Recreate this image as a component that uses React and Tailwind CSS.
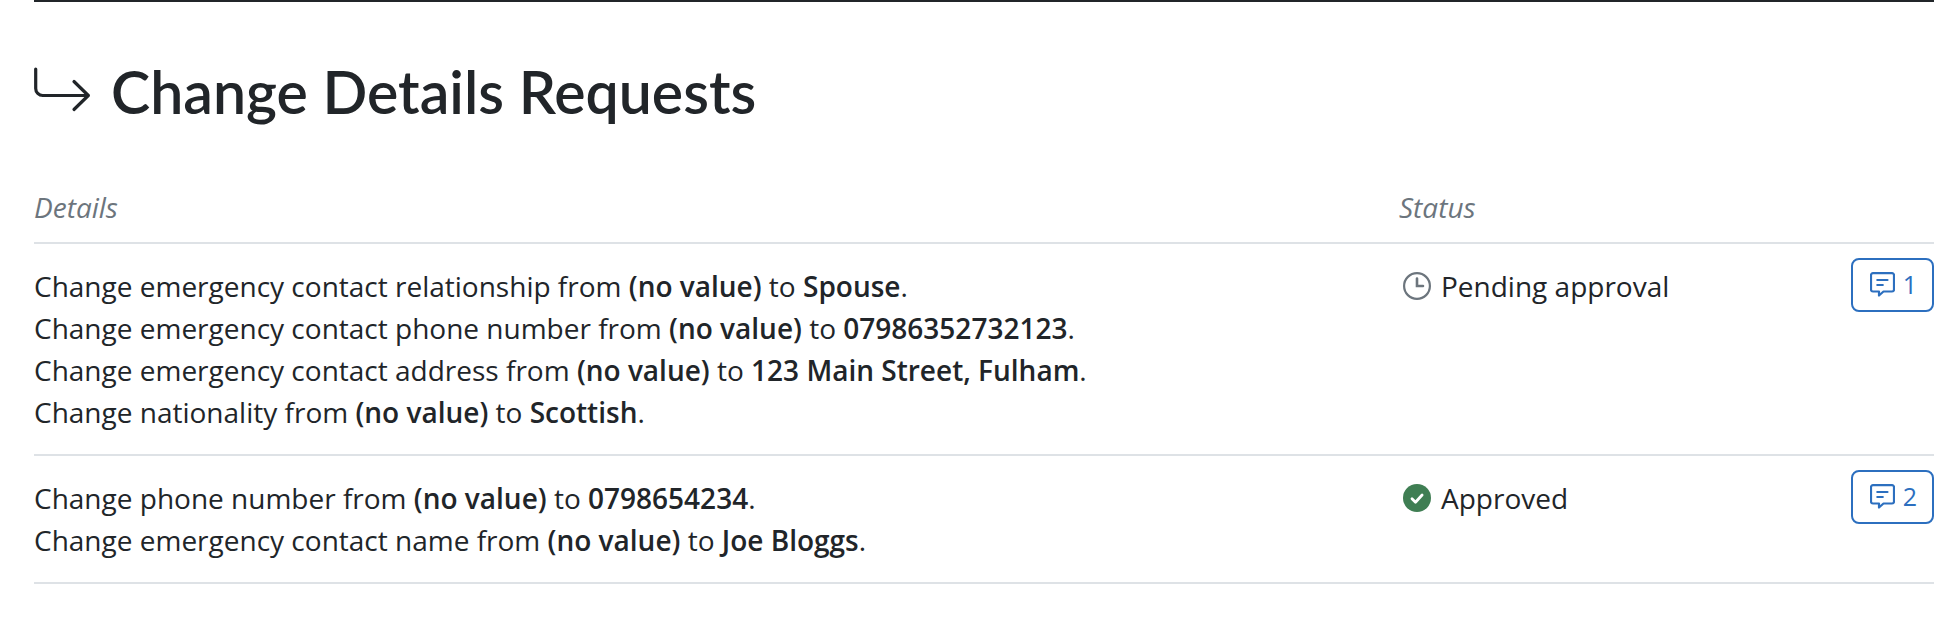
import React from 'react';

const requests = [
  {
    id: 1,
    status: 'pending',
    comments: 1,
    changes: [
      { field: 'emergency contact relationship', to: 'Spouse' },
      { field: 'emergency contact phone number', to: '07986352732123' },
      { field: 'emergency contact address', to: '123 Main Street, Fulham' },
      { field: 'nationality', to: 'Scottish' },
    ],
  },
  {
    id: 2,
    status: 'approved',
    comments: 2,
    changes: [
      { field: 'phone number', to: '0798654234' },
      { field: 'emergency contact name', to: 'Joe Bloggs' },
    ],
  },
];

function ArrowIcon() {
  return (
    <svg width="57" height="50" viewBox="0 0 57 50" fill="none" stroke="currentColor" strokeWidth="3.200" strokeLinecap="round" strokeLinejoin="round" aria-hidden="true">
      <path d="M1.700 2v19.500a7 7 0 0 0 7 7H54" />
      <path d="M40 14.500l14.300 14L40 42.500" />
    </svg>
  );
}

function ClockIcon() {
  return (
    <svg className="text-[#6c757d]" width="28" height="28" viewBox="0 0 28 28" fill="none" stroke="currentColor" strokeLinecap="round" aria-hidden="true">
      <circle cx="14" cy="14" r="12.900" strokeWidth="2.200" />
      <path d="M14 6.500V14h6" strokeWidth="2.600" />
    </svg>
  );
}

function CheckIcon() {
  return (
    <svg width="28" height="28" viewBox="0 0 28 28" fill="none" aria-hidden="true">
      <circle cx="14" cy="14" r="14" fill="#3f7e53" />
      <path d="M9 14.700l3.500 3.500 6.600-7.200" stroke="#fff" strokeWidth="2.800" strokeLinecap="round" strokeLinejoin="round" />
    </svg>
  );
}

function CommentIcon() {
  return (
    <svg width="25" height="25" viewBox="0 0 25 25" fill="none" stroke="currentColor" strokeWidth="2.200" strokeLinecap="round" strokeLinejoin="round" aria-hidden="true">
      <path d="M3 1.100h19a2 2 0 0 1 2 2v14.400a2 2 0 0 1-2 2h-8.500L9 23.500v-4H3a2 2 0 0 1-2-2V3.100a2 2 0 0 1 2-2z" />
      <path d="M7.300 8h10.200M7.300 13h5.500" />
    </svg>
  );
}

function Status({ status }) {
  return (
    <div className="flex items-center gap-2.5 pl-1">
      {status === 'approved' ? <CheckIcon /> : <ClockIcon />}
      <span>{status === 'approved' ? 'Approved' : 'Pending approval'}</span>
    </div>
  );
}

export default function App() {
  return (
    <main className="bg-white pl-[34px] pr-6 font-['Open_Sans',sans-serif] text-[28px] leading-[42px] text-[#212529]">
      <section className="border-t-2 border-[#212529] pt-[54px]">
        <h1 className="flex items-center gap-5 font-['Lato',sans-serif] text-[59px] leading-[72px] font-semibold">
          <ArrowIcon />
          Change Details Requests
        </h1>

        <table className="mt-[58px] w-full table-fixed border-collapse text-left">
          <thead>
            <tr className="border-b-2 border-[#dee2e6] text-[#6c757d] italic">
              <th scope="col" className="pb-3.5 font-normal">Details</th>
              <th scope="col" className="w-[380px] pb-3.5 font-normal">Status</th>
              <td className="w-[155px]" />
            </tr>
          </thead>
          <tbody>
            {requests.map((request) => (
              <tr key={request.id} className="border-b-2 border-[#dee2e6] align-top">
                <td className="py-[21px]">
                  {request.changes.map((change) => (
                    <div key={change.field}>
                      Change {change.field} from <strong className="font-semibold">(no value)</strong> to{' '}
                      <strong className="font-semibold">{change.to}</strong>.
                    </div>
                  ))}
                </td>
                <td className="py-[21px]">
                  <Status status={request.status} />
                </td>
                <td className="pt-3.5 text-right">
                  <button
                    type="button"
                    className="inline-flex h-[54px] items-center gap-2 rounded-lg border-2 border-[#2c6fbf] pr-[15px] pb-0.5 pl-[17px] align-top text-[25px] text-[#2c6fbf] hover:bg-blue-50"
                  >
                    <CommentIcon />
                    {request.comments}
                  </button>
                </td>
              </tr>
            ))}
          </tbody>
        </table>
      </section>
    </main>
  );
}
